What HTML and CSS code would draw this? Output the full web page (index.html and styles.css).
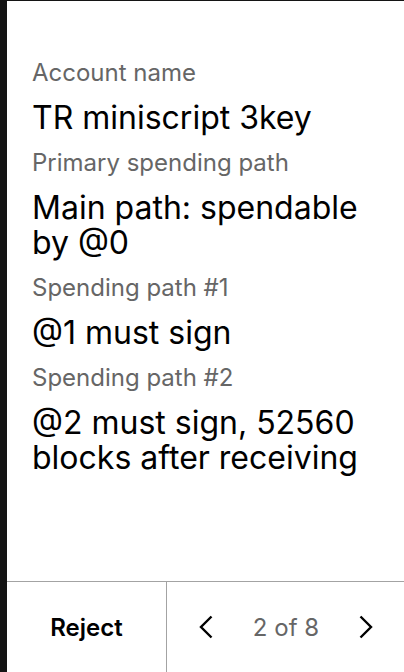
FILE: index.html
```html
<!DOCTYPE html>
<html>
<head>
<meta charset="utf-8">
<link rel="stylesheet" href="styles.css">
</head>
<body>
<div class="screen">
  <div class="content">
    <div class="field">
      <div class="label">Account name</div>
      <div class="value">TR miniscript 3key</div>
    </div>
    <div class="field">
      <div class="label">Primary spending path</div>
      <div class="value">Main path: spendable by @0</div>
    </div>
    <div class="field">
      <div class="label">Spending path #1</div>
      <div class="value">@1 must sign</div>
    </div>
    <div class="field">
      <div class="label">Spending path #2</div>
      <div class="value">@2 must sign, 52560 blocks after receiving</div>
    </div>
  </div>
  <div class="footer">
    <div class="reject">Reject</div>
    <div class="pager">
      <svg class="chev" width="14" height="24" viewBox="0 0 14 24"><path d="M12.5 1.5 L2 12 L12.5 22.5" fill="none" stroke="#000" stroke-width="2.4"/></svg>
      <span class="count">2 of 8</span>
      <svg class="chev" width="14" height="24" viewBox="0 0 14 24"><path d="M1.5 1.5 L12 12 L1.5 22.5" fill="none" stroke="#000" stroke-width="2.4"/></svg>
    </div>
  </div>
</div>
</body>
</html>
```
FILE: styles.css
```css
html, body {
  margin: 0;
  padding: 0;
  background: #fff;
}
body {
  font-family: Inter, "Noto Sans", sans-serif;
  color: #000;
}
.screen {
  width: 404px;
  height: 672px;
  box-sizing: border-box;
  border-left: 7px solid #141414;
  border-top: 1px solid #141414;
  display: flex;
  flex-direction: column;
}
.content {
  flex: 1;
  padding: 57px 25px 0 25px;
  display: flex;
  flex-direction: column;
  gap: 13px;
}
.field {
  display: flex;
  flex-direction: column;
  gap: 13px;
}
.label {
  font-size: 24px;
  line-height: 29px;
  color: #666;
}
.value {
  font-size: 32px;
  line-height: 35px;
  color: #000;
}
.footer {
  height: 91px;
  box-sizing: border-box;
  border-top: 1px solid #a3a3a3;
  display: grid;
  grid-template-columns: 160px 1fr;
}
.reject {
  border-right: 1px solid #a3a3a3;
  display: flex;
  align-items: center;
  justify-content: center;
  font-size: 24px;
  font-weight: 600;
}
.pager {
  display: flex;
  align-items: center;
  justify-content: space-between;
  padding: 0 31px 0 32px;
}
.count {
  font-size: 24px;
  color: #666;
}
.chev {
  display: block;
}
```
